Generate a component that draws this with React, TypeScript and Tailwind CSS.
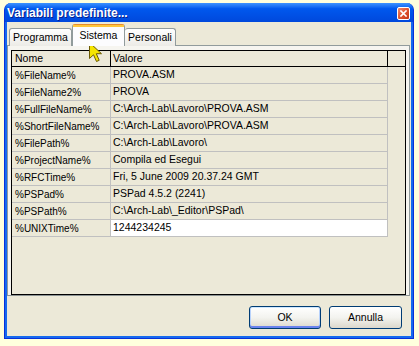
import React from "react";

const RIGHE = [
  { nome: "%FileName%", valore: "PROVA.ASM" },
  { nome: "%FileName2%", valore: "PROVA" },
  { nome: "%FullFileName%", valore: "C:\\Arch-Lab\\Lavoro\\PROVA.ASM" },
  { nome: "%ShortFileName%", valore: "C:\\Arch-Lab\\Lavoro\\PROVA.ASM" },
  { nome: "%FilePath%", valore: "C:\\Arch-Lab\\Lavoro\\" },
  { nome: "%ProjectName%", valore: "Compila ed Esegui" },
  { nome: "%RFCTime%", valore: "Fri, 5 June 2009 20.37.24 GMT" },
  { nome: "%PSPad%", valore: "PSPad 4.5.2 (2241)" },
  { nome: "%PSPath%", valore: "C:\\Arch-Lab\\_Editor\\PSPad\\" },
  { nome: "%UNIXTime%", valore: "1244234245", edit: true },
];

const FONT = "font-['Liberation_Sans',Arial,sans-serif]";

export default function App() {
  return (
    <div className={`relative w-[419px] h-[346px] bg-[#ffffdd] pt-[3px] pl-[4px] ${FONT}`}>
      {/* Finestra */}
      <div className="w-[410px] h-[336px] flex flex-col rounded-t-[7px] overflow-hidden bg-[#166aee] border-x border-b border-[#0831d9]">
        {/* Titolo */}
        <div className="h-[19px] shrink-0 flex items-center justify-between pl-[2px] pr-[3px] bg-linear-to-b from-[#3d93ff] via-[#0058ee] via-30% to-[#0048dc]">
          <span className="text-[12px] font-bold text-white leading-none [text-shadow:1px_1px_0_#0a1e8c]">
            Variabili predefinite...
          </span>
          <div className="w-[13px] h-[13px] mt-[2px] rounded-[2px] border border-white bg-linear-to-br from-[#f0896a] via-[#e0532f] to-[#c23414] flex items-center justify-center">
            <svg width="7" height="7" viewBox="0 0 7 7">
              <path d="M1 1 L6 6 M6 1 L1 6" stroke="#fff" strokeWidth="1.6" strokeLinecap="square" />
            </svg>
          </div>
        </div>

        {/* Corpo */}
        <div className="flex-1 mx-[2px] mb-[2px] bg-[#ece9d8] flex flex-col">
          {/* Schede */}
          <div className="h-[22px] mt-[1px] pl-[2px] flex items-end relative z-10">
            <div className="w-[63px] h-[18px] -mb-px border border-b-0 border-[#919b9c] rounded-t-[3px] bg-linear-to-b from-white to-[#ecebe6] flex items-center justify-center text-[10.5px] text-black">
              Programma
            </div>
            <div className="w-[53px] h-[22px] -mb-px border border-b-0 border-[#919b9c] border-t-[#e68b2c] rounded-t-[3px] bg-[#fcfcfe] flex flex-col">
              <div className="h-[2px] bg-[#ffc73c]" />
              <div className="flex-1 flex items-center justify-center text-[10.5px] text-black pb-[2px]">Sistema</div>
            </div>
            <div className="w-[51px] h-[18px] -mb-px border border-b-0 border-l-0 border-[#919b9c] rounded-t-[3px] bg-linear-to-b from-white to-[#ecebe6] flex items-center justify-center text-[10.5px] text-black">
              Personali
            </div>
          </div>

          {/* Pannello */}
          <div className="h-[251px] mr-[1px] border border-[#919b9c] border-b-[#8a9293] bg-[#f6f5f0] pt-[4px] pl-[3px] pr-[3px]">
            <div className="h-[245px] border border-black bg-[#ece9d8] flex flex-col text-[10.5px] text-black">
              {/* Intestazione */}
              <div className="h-[16px] shrink-0 flex border-b border-black">
                <div className="w-[99px] border-r border-black pl-[3px] flex items-center">Nome</div>
                <div className="w-[277px] border-r border-black pl-[2px] flex items-center">Valore</div>
                <div className="flex-1" />
              </div>
              {RIGHE.map((r) => (
                <div key={r.nome} className="h-[17px] w-[376px] shrink-0 flex border-b border-[#c0c0c0]">
                  <div className="w-[99px] border-r border-[#c0c0c0] pl-[3px] flex items-center text-[10px] whitespace-nowrap">
                    {r.nome}
                  </div>
                  <div
                    className={`w-[277px] border-r border-[#c0c0c0] pl-[2px] flex items-center whitespace-nowrap ${
                      r.edit ? "bg-white" : ""
                    }`}
                  >
                    {r.valore}
                  </div>
                </div>
              ))}
            </div>
          </div>

          {/* Pulsanti */}
          <div className="flex-1 flex justify-end items-start gap-[8px] pt-[10px] pr-[9px]">
            <button
              type="button"
              className="w-[72px] h-[23px] rounded-[3px] border border-[#003c74] bg-linear-to-b from-white via-[#f3f3ef] to-[#dcd8cc] shadow-[inset_0_1px_0_#cee7ff,inset_0_-2px_0_#6982ee,inset_1px_0_0_#b8d2fb,inset_-1px_0_0_#b8d2fb] text-[10.5px] text-black"
            >
              OK
            </button>
            <button
              type="button"
              className="w-[73px] h-[23px] rounded-[3px] border border-[#003c74] bg-linear-to-b from-white via-[#f3f3ef] to-[#dcd8cc] text-[10.5px] text-black"
            >
              Annulla
            </button>
          </div>
        </div>
      </div>

      {/* Puntatore del mouse */}
      <svg className="absolute left-[89px] top-[42px]" width="14" height="21" viewBox="0 0 14 21">
        <path
          d="M0.5 0.5 L0.5 16.5 L4.5 12.8 L7.5 19.5 L10.2 18.3 L7.3 11.7 L12.5 11.7 Z"
          fill="#f5e400"
          stroke="#6b5a00"
          strokeWidth="1"
          strokeLinejoin="round"
        />
      </svg>
    </div>
  );
}
